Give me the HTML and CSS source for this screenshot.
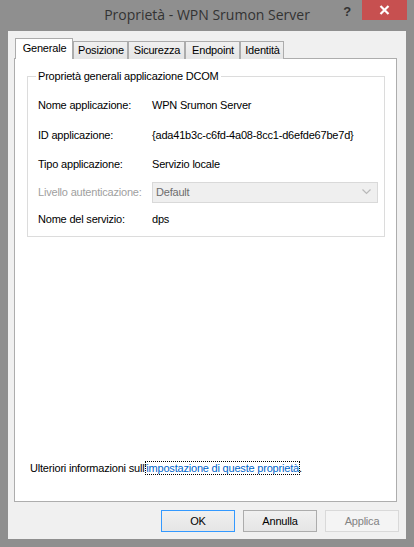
FILE: index.html
```html
<!DOCTYPE html>
<html lang="it">
<head>
    <meta charset="UTF-8">
    <title>Proprietà - WPN Srumon Server</title>
    <link rel="stylesheet" href="styles.css">
</head>
<body>
    <div class="window">
        <div class="titlebar">
            <span></span>
            <span class="title">Proprietà - WPN Srumon Server</span>
            <div class="controls">
                <span class="help">?</span>
                <span class="close">
                    <svg width="11" height="10" viewBox="0 0 11 10">
                        <path d="M1.5 1 L9.5 9 M9.5 1 L1.5 9" stroke="#fff" stroke-width="2.2" fill="none"/>
                    </svg>
                </span>
            </div>
        </div>

        <div class="client">
            <div class="tabs">
                <div class="tab selected w-generale">Generale</div>
                <div class="tab w-posizione">Posizione</div>
                <div class="tab w-sicurezza">Sicurezza</div>
                <div class="tab w-endpoint">Endpoint</div>
                <div class="tab w-identita">Identità</div>
            </div>

            <div class="panel">
                <fieldset class="group">
                    <legend>Proprietà generali applicazione DCOM</legend>
                    <div class="row r1">
                        <span class="label">Nome applicazione:</span>
                        <span>WPN Srumon Server</span>
                    </div>
                    <div class="row r2">
                        <span class="label">ID applicazione:</span>
                        <span>{ada41b3c-c6fd-4a08-8cc1-d6efde67be7d}</span>
                    </div>
                    <div class="row r3">
                        <span class="label">Tipo applicazione:</span>
                        <span>Servizio locale</span>
                    </div>
                    <div class="row r4">
                        <span class="label disabled">Livello autenticazione:</span>
                        <div class="combo">
                            <span>Default</span>
                            <svg width="9" height="6" viewBox="0 0 9 6">
                                <path d="M0.5 0.5 L4.5 4.5 L8.5 0.5" stroke="#b9b9b9" stroke-width="1.2" fill="none"/>
                            </svg>
                        </div>
                    </div>
                    <div class="row r5">
                        <span class="label">Nome del servizio:</span>
                        <span>dps</span>
                    </div>
                </fieldset>

                <p class="more">Ulteriori informazioni sull'<a href="#" class="link">impostazione di queste proprietà</a>.</p>
            </div>

            <div class="buttons">
                <button class="btn default">OK</button>
                <button class="btn">Annulla</button>
                <button class="btn" disabled>Applica</button>
            </div>
        </div>
    </div>
</body>
</html>
```

FILE: styles.css
```css
body {
    margin: 0;
    background: #8f8f8f;
    font-family: "Liberation Sans", Arial, sans-serif;
    font-size: 11px;
    letter-spacing: -0.2px;
    color: #000;
}
.window {
    width: 414px;
    height: 547px;
    background: #8f8f8f;
    display: flex;
    flex-direction: column;
}
.titlebar {
    height: 31px;
    display: grid;
    grid-template-columns: 1fr auto 1fr;
}
.title {
    font-family: "Open Sans", "Noto Sans", sans-serif;
    font-size: 14px;
    letter-spacing: 0;
    color: #333;
    line-height: 30px;
    white-space: nowrap;
}
.controls {
    display: flex;
    justify-content: flex-end;
    align-items: flex-start;
}
.help {
    font-family: "Liberation Sans", sans-serif;
    font-weight: bold;
    font-size: 13px;
    color: #333;
    margin-top: 4px;
    margin-right: 11px;
}
.close {
    width: 45px;
    height: 20px;
    background: #c75050;
    margin-right: 7px;
    display: flex;
    align-items: center;
    justify-content: center;
}
.client {
    height: 508px;
    margin: 0 8px;
    background: #f0f0f0;
    padding: 7px 7px 0 6px;
    box-sizing: border-box;
    display: flex;
    flex-direction: column;
}
.tabs {
    display: flex;
    align-items: flex-end;
    height: 21px;
    margin: 0 0 -1px 1px;
    position: relative;
    z-index: 1;
}
.tab {
    box-sizing: border-box;
    height: 18px;
    border: 1px solid #acacac;
    border-bottom: none;
    background: linear-gradient(#f0f0f0, #e5e5e5);
    text-align: center;
    line-height: 17px;
    padding-left: 1px;
}
.tab.selected {
    height: 21px;
    background: #fff;
    line-height: 19px;
}
.w-generale { width: 58px; }
.w-posizione { width: 55px; }
.w-sicurezza { width: 57px; }
.w-endpoint { width: 55px; }
.w-identita { width: 44px; }
.panel {
    height: 444px;
    box-sizing: border-box;
    margin-right: 2px;
    background: #fff;
    border: 1px solid #adadad;
    padding: 11px 11px 0 12px;
    display: flex;
    flex-direction: column;
}
.group {
    margin: 0;
    border: 1px solid #dcdcdc;
    padding: 7px 0 4px 10px;
    min-width: 0;
}
.group legend {
    padding: 0 2px;
    margin-left: -2px;
    line-height: 13px;
}
.row {
    display: flex;
    align-items: center;
}
.r1, .r2 { height: 30px; }
.r3, .r4 { height: 28px; }
.r5 { height: 26px; }
.label {
    width: 114px;
    flex-shrink: 0;
}
.disabled {
    color: #a0a0a0;
}
.combo {
    box-sizing: border-box;
    width: 226px;
    height: 21px;
    border: 1px solid #d9d9d9;
    background: #efefef;
    color: #6d6d6d;
    display: flex;
    align-items: center;
    justify-content: space-between;
    padding: 0 6px 0 3px;
}
.more {
    margin: auto 0 26px 3px;
    line-height: 13px;
}
.link {
    color: #0066cc;
    text-decoration: none;
    outline: 1px dotted #000;
}
.buttons {
    display: flex;
    justify-content: flex-end;
    gap: 8px;
    padding-top: 8px;
}
.btn {
    box-sizing: border-box;
    width: 74px;
    height: 22px;
    font-family: "Liberation Sans", Arial, sans-serif;
    font-size: 11px;
    letter-spacing: -0.2px;
    color: #000;
    border: 1px solid #acacac;
    background: linear-gradient(#f0f0f0, #e5e5e5);
    padding: 0;
}
.btn.default {
    border-color: #3399ff;
}
.btn:disabled {
    color: #838383;
    border-color: #d9d9d9;
    background: #f4f4f4;
}
```
